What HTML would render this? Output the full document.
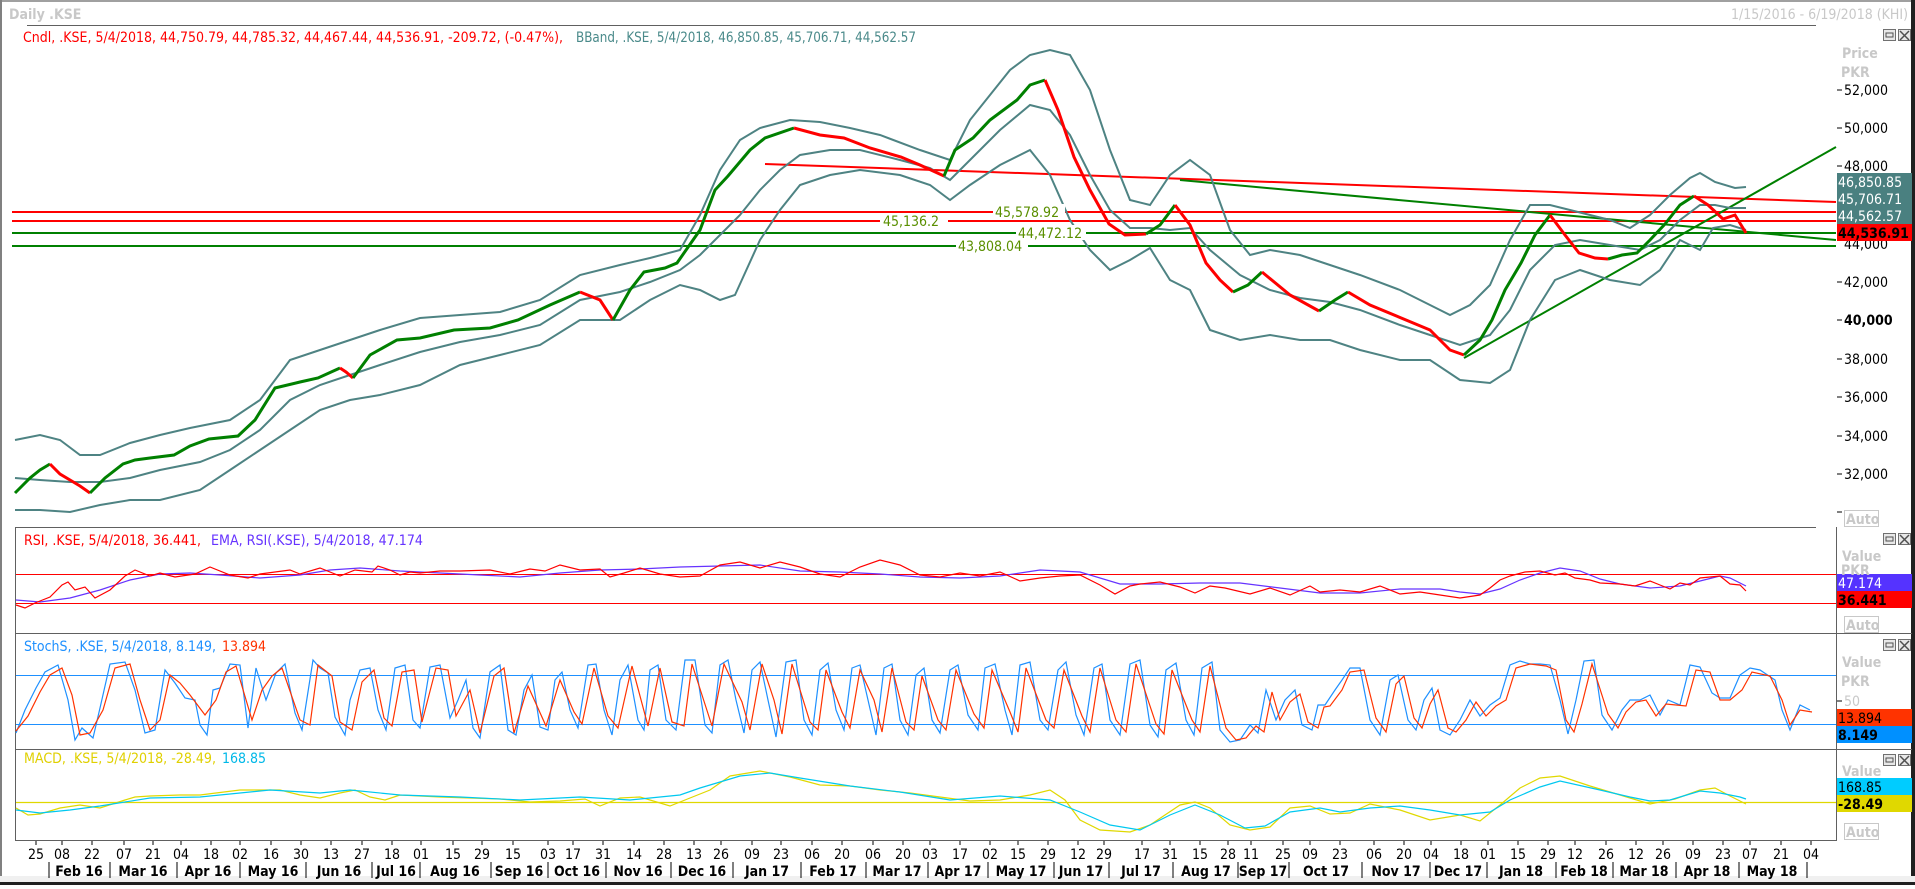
<!DOCTYPE html>
<html><head><meta charset="utf-8"><style>
html,body{margin:0;padding:0;background:#fff;}
body{width:1915px;height:885px;overflow:hidden;position:relative;font-family:"DejaVu Sans Condensed","Liberation Sans",sans-serif;}
svg text{font-family:"DejaVu Sans Condensed","Liberation Sans",sans-serif;}
</style></head><body>
<svg width="1915" height="885" viewBox="0 0 1915 885" xmlns="http://www.w3.org/2000/svg">
<rect x="0" y="0" width="1915" height="885" fill="#fff"/>
<rect x="0" y="0" width="1915" height="2" fill="#a0a0a0"/>
<rect x="0" y="0" width="2" height="885" fill="#808080"/>
<rect x="1911" y="0" width="4" height="885" fill="#202020"/>
<rect x="0" y="876" width="1915" height="9" fill="#f0f0f0"/>
<rect x="0" y="882" width="1915" height="3" fill="#202020"/>
<text x="9" y="19" font-size="14" font-weight="bold" fill="#c8c8c8">Daily .KSE</text>
<text x="1908" y="19" font-size="14" fill="#c8c8c8" text-anchor="end">1/15/2016 - 6/19/2018 (KHI)</text>
<line x1="27" y1="25.5" x2="1816" y2="25.5" stroke="#606060" stroke-width="1"/>
<text x="23" y="42" font-size="14" fill="#ff0000" textLength="540" lengthAdjust="spacingAndGlyphs">Cndl, .KSE, 5/4/2018, 44,750.79, 44,785.32, 44,467.44, 44,536.91, -209.72, (-0.47%),</text>
<text x="576" y="42" font-size="14" fill="#4a8a8a" textLength="340" lengthAdjust="spacingAndGlyphs">BBand, .KSE, 5/4/2018, 46,850.85, 45,706.71, 44,562.57</text>

<line x1="15" y1="527.5" x2="1816" y2="527.5" stroke="#606060"/>
<line x1="15" y1="633.5" x2="1912" y2="633.5" stroke="#606060"/>
<line x1="15" y1="749.5" x2="1912" y2="749.5" stroke="#606060"/>
<line x1="15" y1="840.5" x2="1837" y2="840.5" stroke="#606060"/>
<line x1="15.5" y1="527" x2="15.5" y2="840" stroke="#606060"/>
<line x1="1836.5" y1="527" x2="1836.5" y2="840" stroke="#606060"/>

<line x1="12" y1="212" x2="1836" y2="212" stroke="#ff0000" stroke-width="2"/>
<line x1="12" y1="221" x2="1836" y2="221" stroke="#ff0000" stroke-width="2"/>
<line x1="12" y1="233" x2="1836" y2="233" stroke="#008000" stroke-width="2"/>
<line x1="12" y1="246" x2="1836" y2="246" stroke="#008000" stroke-width="2"/>
<line x1="765" y1="164" x2="1836" y2="202" stroke="#ff0000" stroke-width="2"/>
<line x1="1180" y1="180" x2="1836" y2="240" stroke="#008000" stroke-width="2"/>
<line x1="1464" y1="358" x2="1836" y2="147" stroke="#008000" stroke-width="2"/>

<g fill="none" stroke="#4e8383" stroke-width="2">
<polyline points="15,440 40,435 60,440 80,455 100,455 130,443 160,435 190,428 230,420 260,400 290,360 320,350 350,340 380,330 420,318 460,315 500,312 540,300 580,275 620,265 650,258 680,250 700,215 720,170 740,140 760,128 790,120 820,122 850,128 880,135 920,150 950,160 970,120 990,95 1010,70 1030,55 1050,50 1070,55 1090,90 1110,150 1130,200 1150,205 1170,175 1190,160 1210,175 1230,230 1250,255 1270,250 1300,255 1330,265 1360,275 1400,290 1430,305 1450,315 1470,305 1490,285 1510,240 1530,205 1550,205 1570,210 1590,215 1610,220 1630,228 1650,215 1670,195 1690,178 1700,173 1715,182 1735,188 1746,187"/>
<polyline points="15,478 40,480 70,482 100,482 130,478 160,470 200,462 230,450 260,430 290,400 320,385 350,375 380,365 420,352 460,342 500,335 540,325 580,300 620,292 650,282 680,270 700,255 720,235 740,215 760,190 780,170 800,155 830,150 860,150 900,160 930,168 950,180 970,160 1000,130 1030,105 1050,110 1070,135 1090,175 1110,210 1130,228 1150,228 1170,230 1190,228 1210,250 1240,275 1270,290 1300,298 1330,302 1360,310 1400,325 1430,335 1460,345 1490,335 1510,310 1530,270 1555,245 1580,240 1610,245 1640,250 1660,240 1680,220 1700,205 1715,205 1730,208 1746,208"/>
<polyline points="15,510 40,510 70,512 100,505 130,500 160,500 200,490 230,470 260,450 290,430 320,410 350,400 380,395 420,385 460,365 500,355 540,345 580,320 620,320 650,300 680,285 700,290 720,300 735,295 760,240 780,210 800,185 830,175 860,170 900,175 930,185 950,200 970,185 1000,165 1030,150 1050,175 1070,220 1090,250 1110,270 1130,260 1150,248 1170,280 1190,290 1210,330 1240,340 1270,335 1300,340 1330,340 1360,350 1400,360 1430,360 1460,380 1490,383 1510,370 1530,320 1555,280 1580,270 1610,280 1640,285 1660,270 1680,240 1700,250 1713,228 1730,225 1746,230"/>
</g>

<g fill="none" stroke-width="3">
<polyline stroke="#008000" points="15,493 22,486 30,478 40,470 50,464"/>
<polyline stroke="#ff0000" points="50,464 60,474 70,480 80,486 90,493"/>
<polyline stroke="#008000" points="90,493 105,478 123,464 135,460 150,458 174,455 190,446 209,439 238,436 255,420 275,388 300,382 318,378 340,368"/>
<polyline stroke="#ff0000" points="340,368 346,372 353,378"/>
<polyline stroke="#008000" points="353,378 370,355 397,340 420,338 454,330 490,328 518,320 550,305 580,292"/>
<polyline stroke="#ff0000" points="580,292 600,300 613,320"/>
<polyline stroke="#008000" points="613,320 630,290 644,272 665,268 677,263 700,230 715,190 728,176 750,150 765,138 794,128"/>
<polyline stroke="#ff0000" points="794,128 820,135 844,138 870,148 901,157 920,165 944,176"/>
<polyline stroke="#008000" points="944,176 955,150 973,138 990,120 1017,100 1030,85 1045,80"/>
<polyline stroke="#ff0000" points="1045,80 1058,110 1074,157 1090,190 1109,224 1125,235 1146,234"/>
<polyline stroke="#008000" points="1146,234 1160,225 1175,205"/>
<polyline stroke="#ff0000" points="1175,205 1190,225 1206,263 1220,280 1233,292"/>
<polyline stroke="#008000" points="1233,292 1248,285 1262,272"/>
<polyline stroke="#ff0000" points="1262,272 1290,295 1319,311"/>
<polyline stroke="#008000" points="1319,311 1335,300 1348,292"/>
<polyline stroke="#ff0000" points="1348,292 1370,305 1406,320 1430,330 1450,350 1464,355"/>
<polyline stroke="#008000" points="1464,355 1480,340 1492,320 1505,290 1521,263 1535,235 1550,215"/>
<polyline stroke="#ff0000" points="1550,215 1565,235 1579,253 1595,258 1608,259"/>
<polyline stroke="#008000" points="1608,259 1622,255 1637,253 1650,240 1665,224 1680,205 1694,196"/>
<polyline stroke="#ff0000" points="1694,196 1708,205 1723,219 1735,215 1746,233"/>
</g>

<g font-size="14" fill="#5a8f00">
<rect x="993" y="204" width="72" height="15" fill="#fff"/><text x="995" y="217">45,578.92</text>
<rect x="880" y="213" width="68" height="15" fill="#fff"/><text x="883" y="226">45,136.2</text>
<rect x="1016" y="225" width="70" height="15" fill="#fff"/><text x="1018" y="238">44,472.12</text>
<rect x="956" y="238" width="72" height="15" fill="#fff"/><text x="958" y="251">43,808.04</text>
</g>

<g font-size="14" fill="#000">
<text x="1842" y="58" font-weight="bold" fill="#c8c8c8">Price</text>
<text x="1841" y="77" font-weight="bold" fill="#c8c8c8">PKR</text>
<g stroke="#000"><line x1="1837" y1="90" x2="1842" y2="90"/><line x1="1837" y1="128" x2="1842" y2="128"/><line x1="1837" y1="166" x2="1842" y2="166"/><line x1="1837" y1="282" x2="1842" y2="282"/><line x1="1837" y1="320" x2="1842" y2="320"/><line x1="1837" y1="359" x2="1842" y2="359"/><line x1="1837" y1="397" x2="1842" y2="397"/><line x1="1837" y1="436" x2="1842" y2="436"/><line x1="1837" y1="474" x2="1842" y2="474"/><line x1="1837" y1="512" x2="1842" y2="512"/></g>
<text x="1844" y="95">52,000</text><text x="1844" y="133">50,000</text><text x="1844" y="171">48,000</text>
<text x="1844" y="249">44,000</text>
<text x="1844" y="287">42,000</text><text x="1844" y="325" font-weight="bold">40,000</text><text x="1844" y="364">38,000</text>
<text x="1844" y="402">36,000</text><text x="1844" y="441">34,000</text><text x="1844" y="479">32,000</text>
</g>
<rect x="1837" y="173" width="75" height="51" fill="#4a8080"/>
<g font-size="14" fill="#fff"><text x="1838" y="187">46,850.85</text><text x="1838" y="204">45,706.71</text><text x="1838" y="221">44,562.57</text></g>
<rect x="1837" y="224" width="75" height="17" fill="#ff0000"/>
<text x="1838" y="238" font-size="14" font-weight="bold" fill="#000">44,536.91</text>

<g font-size="14" font-weight="bold" fill="#c8c8c8" stroke="none">
<rect x="1844.5" y="510.5" width="34" height="16" fill="#fff" stroke="#c8c8c8"/><text x="1846" y="524">Auto</text>
<rect x="1844.5" y="616.5" width="34" height="16" fill="#fff" stroke="#c8c8c8"/><text x="1846" y="630">Auto</text>
<rect x="1844.5" y="823.5" width="34" height="16" fill="#fff" stroke="#c8c8c8"/><text x="1846" y="837">Auto</text>
</g>
<g id="btns">
<rect x="1883.5" y="29.5" width="12" height="11" fill="#e8e8e8" stroke="#707070"/><rect x="1886" y="33" width="7" height="4" fill="none" stroke="#505050"/>
<rect x="1898.5" y="29.5" width="12" height="11" fill="#e8e8e8" stroke="#707070"/><path d="M1900,31 L1909,40 M1909,31 L1900,40" stroke="#505050" stroke-width="1.5"/>
</g>
<use href="#btns" y="504"/><use href="#btns" y="610"/><use href="#btns" y="725"/>

<text x="24" y="545" font-size="14" fill="#ff0000" textLength="177" lengthAdjust="spacingAndGlyphs">RSI, .KSE, 5/4/2018, 36.441,</text>
<text x="211" y="545" font-size="14" fill="#6633ff" textLength="212" lengthAdjust="spacingAndGlyphs">EMA, RSI(.KSE), 5/4/2018, 47.174</text>
<line x1="16" y1="574.5" x2="1836" y2="574.5" stroke="#ff0000"/>
<line x1="16" y1="603.5" x2="1836" y2="603.5" stroke="#ff0000"/>
<polyline fill="none" stroke="#6633ff" stroke-width="1.2" points="16,600 40,602 70,598 100,590 130,580 160,574 190,573 220,575 260,578 300,575 330,570 360,568 400,571 440,573 480,575 520,577 560,573 600,570 640,569 680,567 720,566 760,565 800,571 840,572 880,574 920,577 960,578 1000,576 1040,570 1080,572 1120,584 1160,584 1200,583 1240,583 1280,588 1320,593 1360,593 1400,589 1440,589 1460,592 1480,594 1500,589 1520,580 1540,573 1560,568 1580,571 1600,579 1620,584 1650,588 1680,586 1700,581 1720,576 1730,578 1746,586"/>
<polyline fill="none" stroke="#ff0000" stroke-width="1.2" points="16,605 25,608 35,603 50,597 62,585 68,582 75,590 85,587 95,598 110,590 125,576 135,570 150,576 160,573 175,577 195,574 210,567 230,575 248,578 260,574 290,570 300,574 320,568 340,576 355,570 372,572 378,566 390,570 400,575 410,572 420,573 440,571 460,571 490,570 510,574 530,569 545,571 560,565 580,570 600,569 610,577 624,573 640,568 660,574 680,577 700,576 720,565 740,562 760,568 780,562 800,567 820,574 840,577 860,567 880,560 900,565 920,575 940,577 960,573 980,576 1000,572 1020,581 1040,578 1060,576 1080,575 1100,585 1115,594 1130,586 1140,584 1160,582 1180,587 1195,593 1210,586 1225,588 1250,594 1270,588 1290,595 1310,586 1320,592 1340,590 1360,592 1380,586 1400,594 1420,592 1440,595 1460,598 1480,595 1490,588 1500,580 1510,576 1525,572 1540,571 1555,575 1565,573 1575,578 1590,580 1600,583 1620,584 1635,586 1650,581 1660,585 1670,589 1680,583 1690,585 1700,578 1720,576 1730,584 1740,585 1746,591"/>
<rect x="1837" y="574" width="75" height="17" fill="#5533ff"/>
<text x="1838" y="588" font-size="14" fill="#fff">47.174</text>
<rect x="1837" y="591" width="75" height="17" fill="#ff0000"/>
<text x="1838" y="605" font-size="14" font-weight="bold" fill="#000">36.441</text>
<text x="1842" y="561" font-size="14" font-weight="bold" fill="#c8c8c8">Value</text>
<text x="1841" y="575" font-size="14" font-weight="bold" fill="#c8c8c8">PKR</text>

<text x="24" y="651" font-size="14" fill="#1e90ff" textLength="192" lengthAdjust="spacingAndGlyphs">StochS, .KSE, 5/4/2018, 8.149,</text>
<text x="222" y="651" font-size="14" fill="#ff3300">13.894</text>
<line x1="16" y1="675.5" x2="1836" y2="675.5" stroke="#1e90ff"/>
<line x1="16" y1="724.5" x2="1836" y2="724.5" stroke="#1e90ff"/>
<polyline fill="none" stroke="#1e90ff" stroke-width="1.2" points="16,733 25,710 36,688 45,672 58,665 68,700 75,740 82,728 93,738 100,708 110,664 125,662 135,690 145,733 155,730 165,670 175,683 185,698 195,700 200,725 207,735 213,690 220,688 230,664 240,665 248,728 256,668 266,700 276,673 285,664 295,713 302,730 313,660 320,668 328,673 335,717 345,735 350,700 360,670 370,668 378,710 386,730 395,668 405,665 413,720 420,728 430,667 440,665 450,718 458,700 466,680 473,728 480,738 490,672 500,665 508,730 516,735 524,690 532,675 540,727 548,730 555,680 562,672 570,710 578,728 588,665 596,664 604,710 612,735 620,680 628,665 638,720 644,730 650,670 658,665 666,720 676,730 685,660 695,660 705,725 712,733 720,665 728,660 736,700 744,733 752,670 760,662 768,700 776,737 786,662 796,660 804,720 812,735 820,670 828,663 836,710 844,730 852,668 860,665 868,700 876,735 884,668 892,664 900,720 908,735 916,675 924,668 932,720 940,733 950,670 958,665 968,715 978,730 985,668 995,664 1005,710 1012,735 1020,665 1030,662 1040,720 1048,730 1058,670 1066,662 1076,715 1084,735 1094,668 1102,664 1110,720 1120,735 1130,664 1140,660 1150,725 1158,737 1166,670 1176,663 1186,720 1194,735 1202,668 1212,662 1220,730 1230,742 1240,740 1250,725 1258,733 1266,690 1276,720 1285,700 1295,690 1302,725 1312,730 1318,705 1325,705 1335,690 1342,680 1350,668 1360,668 1370,720 1380,735 1390,680 1398,675 1408,720 1416,730 1424,700 1432,688 1440,730 1450,735 1460,720 1470,700 1480,716 1490,705 1500,698 1510,665 1520,661 1530,664 1540,664 1550,665 1560,700 1568,734 1576,700 1584,661 1594,660 1602,715 1612,730 1622,710 1630,700 1640,700 1650,695 1660,715 1668,700 1680,705 1690,665 1700,667 1712,693 1720,698 1730,698 1740,675 1750,668 1760,670 1775,680 1782,710 1790,730 1800,705 1810,710"/>
<polyline fill="none" stroke="#ff3300" stroke-width="1.2" points="16,731 28,716 40,692 50,675 62,668 72,695 80,735 90,733 103,710 115,668 130,664 140,700 150,730 160,720 170,675 180,683 190,695 205,715 216,700 226,672 236,666 252,720 262,690 272,676 282,668 300,720 310,725 318,665 332,676 340,722 352,730 362,682 374,670 384,718 392,726 402,672 414,670 422,722 436,668 448,670 456,716 470,690 480,733 494,676 504,668 514,733 528,686 546,726 560,680 574,712 582,724 594,668 608,716 618,728 632,666 648,726 660,668 672,722 684,726 692,664 712,726 724,664 742,702 750,730 762,664 774,700 782,734 792,664 810,722 818,730 826,670 842,712 850,728 860,670 874,700 882,732 892,668 906,722 914,730 922,676 938,720 946,730 956,670 974,714 984,728 992,670 1010,712 1018,732 1026,668 1046,720 1054,728 1064,670 1082,716 1090,732 1100,668 1116,720 1126,732 1136,664 1156,724 1164,734 1172,670 1192,720 1200,732 1210,666 1226,728 1236,740 1246,738 1256,726 1264,732 1272,692 1280,720 1290,702 1300,694 1308,722 1318,728 1324,707 1330,706 1342,690 1350,672 1364,670 1376,718 1386,732 1396,684 1404,676 1414,718 1422,728 1430,704 1438,690 1448,728 1456,732 1466,720 1476,702 1486,716 1496,706 1506,700 1516,668 1530,664 1546,666 1556,670 1566,720 1574,732 1582,704 1592,664 1608,714 1618,728 1626,712 1636,702 1646,700 1656,716 1666,704 1686,706 1696,670 1710,672 1720,700 1730,700 1742,690 1752,672 1770,676 1782,700 1790,725 1800,710 1812,712"/>
<rect x="1837" y="709" width="75" height="17" fill="#ff3300"/>
<text x="1838" y="723" font-size="14" fill="#000">13.894</text>
<rect x="1837" y="726" width="75" height="17" fill="#0090ff"/>
<text x="1838" y="740" font-size="14" font-weight="bold" fill="#000">8.149</text>
<text x="1842" y="667" font-size="14" font-weight="bold" fill="#c8c8c8">Value</text>
<text x="1841" y="686" font-size="14" font-weight="bold" fill="#c8c8c8">PKR</text>
<line x1="1837" y1="701" x2="1842" y2="701" stroke="#000"/>
<text x="1844" y="706" font-size="14" fill="#c8c8c8">50</text>

<text x="24" y="763" font-size="14" fill="#e0d000" textLength="192" lengthAdjust="spacingAndGlyphs">MACD, .KSE, 5/4/2018, -28.49,</text>
<text x="222" y="763" font-size="14" fill="#00b8e8">168.85</text>
<line x1="16" y1="802.5" x2="1836" y2="802.5" stroke="#e0d800" stroke-width="1.2"/>
<polyline fill="none" stroke="#e0d800" stroke-width="1.2" points="16,808 28,815 40,814 60,808 80,805 100,808 125,800 135,797 150,796 180,795 200,795 240,790 280,790 300,795 320,798 340,793 355,790 370,797 385,800 400,795 440,797 470,798 500,799 530,802 560,801 585,799 600,806 620,798 640,797 670,806 690,798 710,790 730,776 760,771 790,777 820,785 850,786 880,790 910,793 940,797 970,801 1000,800 1030,795 1050,790 1065,800 1080,820 1100,830 1130,832 1150,825 1180,805 1195,802 1210,808 1230,825 1250,830 1270,827 1290,808 1310,806 1330,814 1350,813 1370,804 1400,810 1430,820 1460,815 1480,821 1500,805 1520,788 1540,778 1560,776 1590,786 1620,795 1650,804 1675,799 1700,790 1715,788 1730,796 1746,804"/>
<polyline fill="none" stroke="#00c8f0" stroke-width="1.2" points="16,810 40,813 70,810 100,806 150,798 200,797 270,790 320,793 350,790 400,795 460,797 520,800 580,797 630,800 680,795 700,788 740,776 770,773 800,778 850,786 900,792 950,800 1000,796 1050,800 1080,812 1110,825 1140,830 1170,815 1195,805 1220,815 1245,828 1265,826 1290,812 1320,808 1340,812 1370,808 1400,806 1430,810 1460,815 1490,812 1510,800 1540,787 1560,781 1600,790 1630,797 1650,801 1670,800 1690,794 1700,791 1720,793 1740,797 1746,799"/>
<text x="1842" y="776" font-size="14" font-weight="bold" fill="#c8c8c8">Value</text>
<rect x="1837" y="778" width="75" height="17" fill="#00ccff"/>
<text x="1838" y="792" font-size="14" fill="#000">168.85</text>
<rect x="1837" y="795" width="75" height="17" fill="#e0d800"/>
<text x="1838" y="809" font-size="14" font-weight="bold" fill="#000">-28.49</text>

<g stroke="#000" stroke-width="1">
<path d="M36,841v4M62,841v4M92,841v4M124,841v4M153,841v4M181,841v4M211,841v4M240,841v4M271,841v4M301,841v4M331,841v4M362,841v4M392,841v4M421,841v4M453,841v4M482,841v4M513,841v4M548,841v4M573,841v4M603,841v4M634,841v4M664,841v4M694,841v4M721,841v4M752,841v4M781,841v4M812,841v4M842,841v4M873,841v4M903,841v4M930,841v4M960,841v4M990,841v4M1018,841v4M1048,841v4M1078,841v4M1104,841v4M1142,841v4M1170,841v4M1200,841v4M1228,841v4M1251,841v4M1283,841v4M1310,841v4M1340,841v4M1374,841v4M1404,841v4M1431,841v4M1461,841v4M1488,841v4M1518,841v4M1548,841v4M1575,841v4M1606,841v4M1636,841v4M1663,841v4M1693,841v4M1723,841v4M1750,841v4M1781,841v4M1811,841v4"/>
<path d="M49,862v16M110,862v16M177,862v16M240,862v16M306,862v16M372,862v16M420,862v16M491,862v16M548,862v16M606,862v16M671,862v16M733,862v16M801,862v16M866,862v16M928,862v16M988,862v16M1054,862v16M1109,862v16M1173,862v16M1238,862v16M1289,862v16M1362,862v16M1430,862v16M1487,862v16M1556,862v16M1613,862v16M1676,862v16M1739,862v16M1807,862v16"/>
</g>
<g font-size="14" fill="#000" text-anchor="middle">
<text x="36" y="859">25</text><text x="62" y="859">08</text><text x="92" y="859">22</text><text x="124" y="859">07</text><text x="153" y="859">21</text><text x="181" y="859">04</text><text x="211" y="859">18</text><text x="240" y="859">02</text><text x="271" y="859">16</text><text x="301" y="859">30</text><text x="331" y="859">13</text><text x="362" y="859">27</text><text x="392" y="859">18</text><text x="421" y="859">01</text><text x="453" y="859">15</text><text x="482" y="859">29</text><text x="513" y="859">15</text><text x="548" y="859">03</text><text x="573" y="859">17</text><text x="603" y="859">31</text><text x="634" y="859">14</text><text x="664" y="859">28</text><text x="694" y="859">13</text><text x="721" y="859">26</text><text x="752" y="859">09</text><text x="781" y="859">23</text><text x="812" y="859">06</text><text x="842" y="859">20</text><text x="873" y="859">06</text><text x="903" y="859">20</text><text x="930" y="859">03</text><text x="960" y="859">17</text><text x="990" y="859">02</text><text x="1018" y="859">15</text><text x="1048" y="859">29</text><text x="1078" y="859">12</text><text x="1104" y="859">29</text><text x="1142" y="859">17</text><text x="1170" y="859">31</text><text x="1200" y="859">15</text><text x="1228" y="859">28</text><text x="1251" y="859">11</text><text x="1283" y="859">25</text><text x="1310" y="859">09</text><text x="1340" y="859">23</text><text x="1374" y="859">06</text><text x="1404" y="859">20</text><text x="1431" y="859">04</text><text x="1461" y="859">18</text><text x="1488" y="859">01</text><text x="1518" y="859">15</text><text x="1548" y="859">29</text><text x="1575" y="859">12</text><text x="1606" y="859">26</text><text x="1636" y="859">12</text><text x="1663" y="859">26</text><text x="1693" y="859">09</text><text x="1723" y="859">23</text><text x="1750" y="859">07</text><text x="1781" y="859">21</text><text x="1811" y="859">04</text>
</g>
<g font-size="14" font-weight="bold" fill="#000" text-anchor="middle">
<text x="79" y="876">Feb 16</text><text x="143" y="876">Mar 16</text><text x="208" y="876">Apr 16</text><text x="273" y="876">May 16</text><text x="339" y="876">Jun 16</text><text x="396" y="876">Jul 16</text><text x="455" y="876">Aug 16</text><text x="519" y="876">Sep 16</text><text x="577" y="876">Oct 16</text><text x="638" y="876">Nov 16</text><text x="702" y="876">Dec 16</text><text x="767" y="876">Jan 17</text><text x="833" y="876">Feb 17</text><text x="897" y="876">Mar 17</text><text x="958" y="876">Apr 17</text><text x="1021" y="876">May 17</text><text x="1081" y="876">Jun 17</text><text x="1141" y="876">Jul 17</text><text x="1206" y="876">Aug 17</text><text x="1263" y="876">Sep 17</text><text x="1326" y="876">Oct 17</text><text x="1396" y="876">Nov 17</text><text x="1458" y="876">Dec 17</text><text x="1521" y="876">Jan 18</text><text x="1584" y="876">Feb 18</text><text x="1644" y="876">Mar 18</text><text x="1707" y="876">Apr 18</text><text x="1772" y="876">May 18</text>
</g>
</svg>
</body></html>
